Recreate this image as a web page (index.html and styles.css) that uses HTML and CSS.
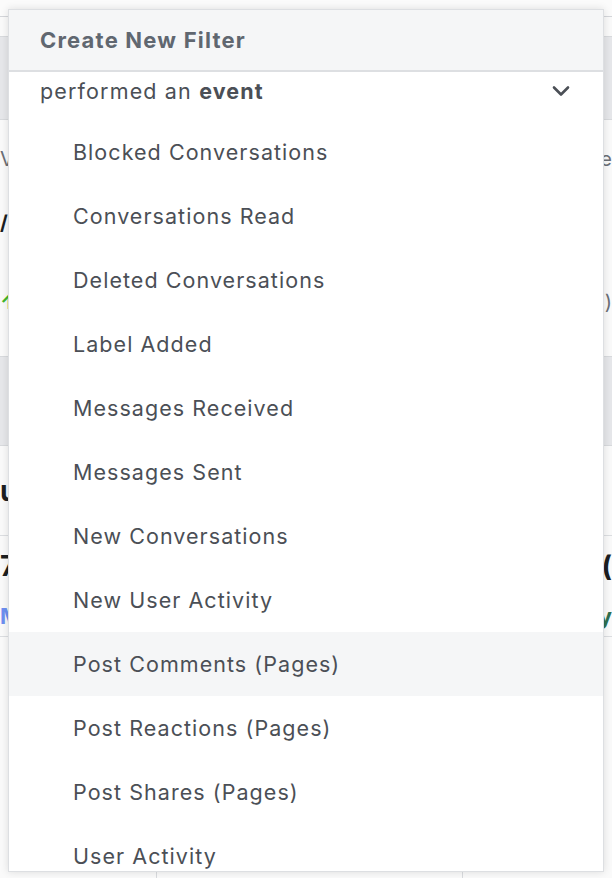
FILE: index.html
```html
<!DOCTYPE html>
<html lang="en">
<head>
<meta charset="utf-8">
<title>Create New Filter</title>
<link rel="stylesheet" href="styles.css">
</head>
<body>
<div class="page">
  <div class="bg-topbar"></div>
  <div class="bg-gap"></div>
  <div class="bg-tabs"></div>
  <div class="bg-row bg-row-a"><span class="bg-l">V</span><span class="bg-r">e</span></div>
  <div class="bg-row bg-row-b"><span class="bg-l bg-dark">/</span><span class="bg-r"></span></div>
  <div class="bg-row bg-row-c"><span class="bg-l bg-green">↑</span><span class="bg-r">)</span></div>
  <div class="bg-tabs bg-tabs2"></div>
  <div class="bg-row bg-row-d"><span class="bg-l bg-black">u</span><span class="bg-r"></span></div>
  <div class="bg-row bg-row-e"><span class="bg-l bg-black">7</span><span class="bg-r bg-black">(</span></div>
  <div class="bg-row bg-row-f"><span class="bg-l bg-blue">M</span><span class="bg-r bg-darkgreen">y</span></div>
  <div class="bg-bottom">
    <span class="bg-col bg-col-1"></span><span class="bg-col bg-col-2"></span><span class="bg-col bg-col-3"></span>
  </div>
</div>

<div class="dropdown">
  <div class="dd-header">Create New Filter</div>
  <div class="dd-select">
    <span class="dd-select-text">performed an <b>event</b></span>
    <svg class="chevron" width="18" height="12" viewBox="0 0 18 12" aria-hidden="true">
      <path d="M2 2.5 L9 9.5 L16 2.5" fill="none" stroke="#4b4f56" stroke-width="2.6" stroke-linecap="round" stroke-linejoin="round"/>
    </svg>
  </div>
  <ul class="dd-list">
    <li class="dd-item">Blocked Conversations</li>
    <li class="dd-item">Conversations Read</li>
    <li class="dd-item">Deleted Conversations</li>
    <li class="dd-item">Label Added</li>
    <li class="dd-item">Messages Received</li>
    <li class="dd-item">Messages Sent</li>
    <li class="dd-item">New Conversations</li>
    <li class="dd-item">New User Activity</li>
    <li class="dd-item is-hover">Post Comments (Pages)</li>
    <li class="dd-item">Post Reactions (Pages)</li>
    <li class="dd-item">Post Shares (Pages)</li>
    <li class="dd-item">User Activity</li>
  </ul>
</div>
</body>
</html>
```

FILE: styles.css
```css
* { box-sizing: border-box; }

html, body {
  margin: 0;
  padding: 0;
  width: 612px;
  height: 878px;
  overflow: hidden;
}

body {
  background: #ffffff;
  font-family: Inter, "Noto Sans", "Liberation Sans", sans-serif;
  position: relative;
}

/* ---------- background page (mostly hidden) ---------- */
.page {
  display: flex;
  flex-direction: column;
  width: 612px;
  height: 878px;
  background: #fafafa;
}

.bg-topbar {
  height: 17px;
  border-bottom: 1px solid #d4d6da;
  background: #fbfbfb;
}

.bg-gap { height: 19px; }

.bg-tabs {
  height: 84px;
  background: #e6e7ea;
  border-top: 1px solid #d8dadd;
  border-bottom: 1px solid #d8dadd;
}

.bg-tabs2 {
  height: 90px;
}

.bg-row {
  display: flex;
  justify-content: space-between;
  align-items: center;
  font-size: 20px;
  color: #6b6f76;
}

.bg-row-a { height: 78px; }
.bg-row-b { height: 50px; }
.bg-row-c { height: 108px; }
.bg-row-d { height: 90px; border-bottom: 1px solid #dcdee1; }
.bg-row-e { height: 60px; font-size: 28px; font-weight: 700; }
.bg-row-f { height: 40px; font-size: 22px; font-weight: 700; }

.bg-l { margin-left: 0; }
.bg-r { margin-right: 0; }
.bg-dark { color: #1c1e21; font-weight: 700; }
.bg-black { color: #1c1e21; font-weight: 700; font-size: 28px; }
.bg-green { color: #42b72a; font-weight: 700; }
.bg-blue { color: #6d8ff0; font-weight: 700; }
.bg-darkgreen { color: #2f6f4f; font-weight: 700; }

.bg-bottom {
  flex: 1;
  display: flex;
  border-top: 1px solid #dcdee1;
}

.bg-col { border-right: 1px solid #d9dbde; }
.bg-col-1 { width: 157px; }
.bg-col-2 { width: 306px; }
.bg-col-3 { flex: 1; border-right: 0; }

/* ---------- dropdown overlay ---------- */
.dropdown {
  position: absolute;
  left: 8px;
  top: 9px;
  width: 596px;
  height: 863px;
  background: #ffffff;
  border: 1px solid #dddfe2;
  box-shadow: 0 0 8px rgba(0, 0, 0, 0.12);
  overflow: hidden;
}

.dd-header {
  height: 62px;
  background: #f5f6f7;
  border-bottom: 2px solid #dddfe2;
  display: flex;
  align-items: center;
  padding-left: 31px;
  font-size: 22px;
  font-weight: 700;
  letter-spacing: 1.2px;
  color: #606770;
}

.dd-select {
  height: 48px;
  display: flex;
  align-items: flex-start;
  justify-content: space-between;
  padding: 5px 31px 0 31px;
  font-size: 21.5px;
  line-height: 28px;
  letter-spacing: 1.15px;
  color: #4b4f56;
}

.dd-select b {
  color: #4b4f56;
  font-weight: 700;
}

.chevron {
  margin-top: 8px;
  margin-right: 2px;
}

.dd-list {
  list-style: none;
  margin: 0;
  padding: 0;
}

.dd-item {
  height: 64px;
  display: flex;
  align-items: center;
  padding-left: 64px;
  font-size: 21.5px;
  letter-spacing: 1.05px;
  color: #4b4f56;
}

.dd-item.is-hover {
  background: #f5f6f7;
}
```
